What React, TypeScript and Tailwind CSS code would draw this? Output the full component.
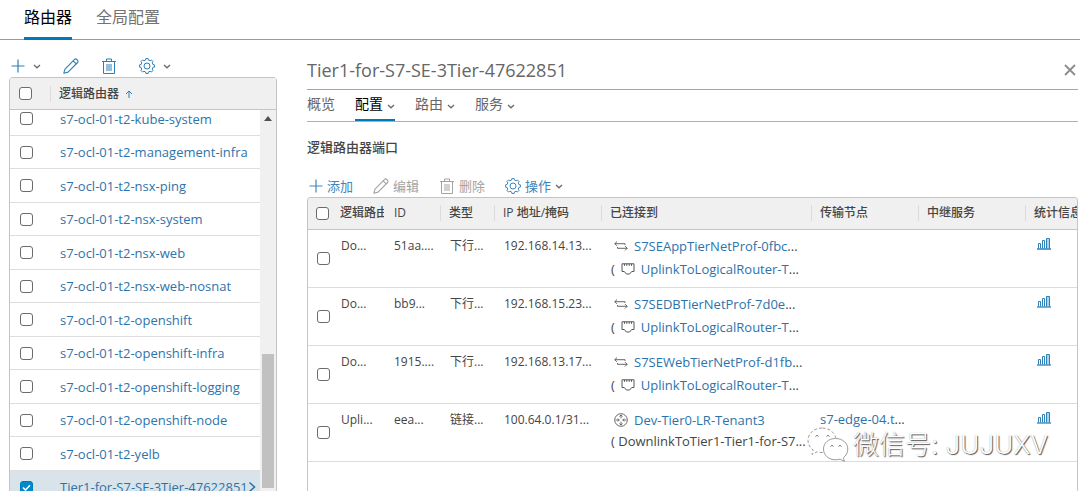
import { useState } from 'react'
import type { ReactNode } from 'react'

const routers = [
  's7-ocl-01-t2-kube-system',
  's7-ocl-01-t2-management-infra',
  's7-ocl-01-t2-nsx-ping',
  's7-ocl-01-t2-nsx-system',
  's7-ocl-01-t2-nsx-web',
  's7-ocl-01-t2-nsx-web-nosnat',
  's7-ocl-01-t2-openshift',
  's7-ocl-01-t2-openshift-infra',
  's7-ocl-01-t2-openshift-logging',
  's7-ocl-01-t2-openshift-node',
  's7-ocl-01-t2-yelb',
  'Tier1-for-S7-SE-3Tier-47622851',
]

const ports = [
  { name: 'Do...', id: '51aa....', type: '下行...', ip: '192.168.14.13...', target: 'S7SEAppTierNetProf-0fbc', peer: 'UplinkToLogicalRouter-T', node: '' },
  { name: 'Do...', id: 'bb9...', type: '下行...', ip: '192.168.15.23...', target: 'S7SEDBTierNetProf-7d0e', peer: 'UplinkToLogicalRouter-T', node: '' },
  { name: 'Do...', id: '1915....', type: '下行...', ip: '192.168.13.17...', target: 'S7SEWebTierNetProf-d1fb', peer: 'UplinkToLogicalRouter-T', node: '' },
  { name: 'Upli...', id: 'eea...', type: '链接...', ip: '100.64.0.1/31...', target: 'Dev-Tier0-LR-Tenant3', peer: '', node: 's7-edge-04.t' },
]

const columns = ['ID', '类型', 'IP 地址/掩码', '已连接到', '传输节点', '中继服务', '统计信息']

function PlusIcon() {
  return (
    <svg viewBox="0 0 14 14" className="size-[14px]" fill="none" stroke="currentColor" strokeWidth="1.2">
      <path d="M7 .5v13M.5 7h13" />
    </svg>
  )
}

function PencilIcon() {
  return (
    <svg viewBox="0 0 16 16" className="size-4" fill="none" stroke="currentColor" strokeWidth="1.1" strokeLinejoin="round">
      <path d="M.8 15.2 2 11.2 11.6 1.4Q12.6.4 13.8 1.5L14.6 2.3Q15.6 3.4 14.6 4.5L5 14.1ZM10.2 2.9l3 3" />
    </svg>
  )
}

function TrashIcon() {
  return (
    <svg viewBox="0 0 16 16" className="size-4" fill="none" stroke="currentColor">
      <path d="M1 3.5h14M2.5 3.5v12h11v-12M5.5 3.5V1h5v2.5M6 6v7M8 6v7M10 6v7" />
    </svg>
  )
}

// eight-tooth outline, centred on 8,8
const gear = Array.from({ length: 8 }, (_, i) => {
  const at = (deg: number, r: number) => {
    const a = ((i * 45 + deg) * Math.PI) / 180
    return `${(8 + r * Math.sin(a)).toFixed(2)} ${(8 - r * Math.cos(a)).toFixed(2)}`
  }
  return `${i ? 'L' : 'M'}${at(-14, 6.1)}L${at(-9, 7.5)}L${at(9, 7.5)}L${at(14, 6.1)}`
}).join('') + 'Z'

function GearIcon() {
  return (
    <svg viewBox="0 0 16 16" className="size-4" fill="none" stroke="currentColor" strokeLinejoin="round">
      <path d={gear} />
      <circle cx="8" cy="8" r="3" />
    </svg>
  )
}

function Chevron() {
  return (
    <svg viewBox="0 0 8 8" className="size-2 text-[#6a6a6a]" fill="none" stroke="currentColor" strokeWidth="1.3">
      <path d="M1 3 4 5.8 7 3" />
    </svg>
  )
}

function SwitchIcon() {
  return (
    <svg viewBox="0 0 14 10" className="h-[10px] w-[14px] shrink-0 text-[#565656]" fill="none" stroke="currentColor" strokeWidth=".9">
      <path d="M3 .5.8 2.7 3 4.9M.8 2.700h10.200v1.300M11 5.100l2.200 2.200L11 9.500M13.200 7.300H3.500V6" />
    </svg>
  )
}

function PortIcon() {
  return (
    <svg viewBox="0 0 14 12" className="h-3 w-[14px] shrink-0 text-[#565656]" fill="none" stroke="currentColor">
      <path d="M1 .8h12v7.7h-2.300L8.600 11H5.400L3.300 8.500H1ZM3.500.8v2M5.800.8v2M8.200.8v2M10.500.8v2" />
    </svg>
  )
}

function RouterIcon() {
  return (
    <svg viewBox="0 0 14 14" className="size-[14px] shrink-0 text-[#565656]" fill="none" stroke="currentColor" strokeWidth=".9">
      <circle cx="7" cy="7" r="6.3" />
      <path d="M7 2v3.400M5.500 3.500 7 2l1.500 1.500M7 12V8.600M5.500 10.500 7 12l1.500-1.500M1.800 7h3.400M3.800 5.500 5.300 7 3.800 8.500M12.200 7H8.800M10.200 5.500 8.700 7l1.500 1.500" />
    </svg>
  )
}

function StatsIcon() {
  return (
    <svg viewBox="0 0 14 13" className="h-[13px] w-[14px]" fill="none" stroke="#2d83b8">
      <path d="M1.500 11.500v-5h2v5M5.500 11.500v-8h2v8" />
      <path d="M9.500 11.500v-10h3v10" fill="#a9d3ea" />
      <path d="M0 12h14" strokeWidth="1.300" />
    </svg>
  )
}

function Checkbox({ label, checked, onChange }: { label: string; checked: boolean; onChange: () => void }) {
  return (
    <span className="relative block size-[13px] shrink-0">
      <input
        type="checkbox"
        aria-label={label}
        checked={checked}
        onChange={onChange}
        className="block size-[13px] appearance-none rounded-[3px] border border-[#6b6b6b] bg-white checked:border-[#0079b8] checked:bg-[#0089cc]"
      />
      {checked && (
        <svg viewBox="0 0 13 13" className="pointer-events-none absolute inset-0 size-[13px]" fill="none" stroke="#fff" strokeWidth="1.6">
          <path d="m3 6.5 2.500 2.500L10 4.300" />
        </svg>
      )}
    </span>
  )
}

function Tool({ children, disabled }: { children: ReactNode; disabled?: boolean }) {
  return (
    <button disabled={disabled} className="flex items-center gap-1 text-[#3c87bd] disabled:text-[#a3a3a3]">
      {children}
    </button>
  )
}

function Watermark() {
  return (
    <div className="pointer-events-none absolute right-8 bottom-7 flex items-center gap-1 font-['Inter','Noto_Sans_CJK_SC',sans-serif]">
      <svg viewBox="0 0 42 36" className="h-9 w-[42px]" fill="#fff" stroke="#9c9c9c">
        <path d="M15 1C7 1 1 6.500 1 13.500c0 4 2 7.200 5.200 9.500L5 27.500l5-2.700c1.600.5 3.300.7 5 .7C23 25.500 29 20 29 13.300 29 6.500 23 1 15 1Z" strokeDasharray="3 2" />
        <path d="M28.500 11.500C21.500 11.500 16.500 16 16.500 22s5 10.800 12 10.800c1.700 0 3.200-.2 4.600-.7l4.400 2.400-1.200-3.800c2.800-2 4.500-5 4.500-8.700 0-6-5.300-10.500-12.300-10.500Z" />
        <path d="M8.500 9.500q1.500-2.500 3 0M19.500 9.500q1.500-2.500 3 0M23.500 19.500q1.500-2.500 3 0M31.500 19.500q1.500-2.500 3 0" fill="none" stroke="#777" />
      </svg>
      <span className="text-[26px] leading-9 font-light text-white [text-shadow:1px_1px_1px_#555,0_0_1px_#999]">
        微信号: JUJUXV
      </span>
    </div>
  )
}

export default function App() {
  const [selected, setSelected] = useState<string[]>([routers[11]])
  const [picked, setPicked] = useState<number[]>([])

  function toggleRouter(name: string) {
    setSelected(selected.includes(name) ? selected.filter(s => s !== name) : [...selected, name])
  }

  function togglePort(i: number) {
    setPicked(picked.includes(i) ? picked.filter(p => p !== i) : [...picked, i])
  }

  return (
    <div className="relative flex h-screen flex-col overflow-hidden bg-white font-['Open_Sans','Noto_Sans_CJK_SC',sans-serif] text-[13px] leading-5 text-[#565656]">
      <nav className="flex h-10 shrink-0 gap-6 border-b border-[#9a9a9a] px-6 text-base">
        <a href="#routers" className="-mb-px border-b-3 border-[#0079b8] pt-[3px] leading-7 text-black">路由器</a>
        <a href="#global" className="pt-[3px] leading-7 text-[#737373]">全局配置</a>
      </nav>

      <div className="flex min-h-0 flex-1">
        <aside className="ml-[9px] flex w-[268px] shrink-0 flex-col pt-[15px]">
          <div className="flex h-[22px] shrink-0 items-center gap-[22px] pl-0.5">
            <button aria-label="添加" className="flex items-center gap-2 text-[#2d7fb8]"><PlusIcon /><Chevron /></button>
            <button aria-label="编辑" className="text-[#2d7fb8]"><PencilIcon /></button>
            <button aria-label="删除" className="text-[#2d7fb8]"><TrashIcon /></button>
            <button aria-label="操作" className="flex items-center gap-2 text-[#2d7fb8]"><GearIcon /><Chevron /></button>
          </div>

          <div className="flex min-h-0 flex-1 flex-col rounded-t border-x border-t border-[#c4c4c4]">
            <div className="flex h-8 shrink-0 items-center border-b border-[#c4c4c4] bg-[#f0f0f0] pl-[9px]">
              <Checkbox label="全选路由器" checked={false} onChange={() => setSelected(routers)} />
              <div className="ml-[18px] h-4 w-px bg-[#dcdcdc]" />
              <span className="ml-2 text-xs font-medium text-[#454545]">逻辑路由器</span>
              <svg viewBox="0 0 8 8" className="ml-1.5 size-2 text-[#2d7fb8]" fill="none" stroke="currentColor">
                <path d="M4 8V1M1 4l3-3 3 3" />
              </svg>
            </div>
            <div className="flex min-h-0 flex-1 overflow-hidden">
              <ul className="-mt-2 min-w-0 flex-1">
                {routers.map(name => (
                  <li
                    key={name}
                    className={`flex h-[33px] items-center gap-[27px] border-b pl-[10px] odd:h-[34px] ${
                      selected.includes(name) ? 'border-[#d9e4ea] bg-[#d9e4ea]' : 'border-[#dedede]'
                    }`}
                  >
                    <Checkbox label={name} checked={selected.includes(name)} onChange={() => toggleRouter(name)} />
                    <a href={'#' + name} className="flex items-center whitespace-nowrap text-[#2d73ab]">
                      {name}
                      {selected.includes(name) && (
                        <svg viewBox="0 0 8 12" className="h-3 w-2" fill="none" stroke="currentColor" strokeWidth="1.6">
                          <path d="m1.500 1.500 5 4.500-5 4.500" />
                        </svg>
                      )}
                    </a>
                  </li>
                ))}
              </ul>
              <div className="flex w-4 shrink-0 flex-col items-center justify-between bg-[#f0f0f0] pt-1.5 pb-[3px]">
                <svg viewBox="0 0 8 5" className="h-[5px] w-2" fill="#505050"><path d="M4 0l4 5H0Z" /></svg>
                <div className="h-[134px] w-3 bg-[#c1c1c1]" />
              </div>
            </div>
          </div>
        </aside>

        <main className="ml-[30px] flex min-w-0 flex-1 flex-col pr-0.5">
          <div className="flex h-[50px] shrink-0 items-center justify-between border-b border-[#a5a5a5] pt-2.5 pr-0.5">
            <h1 className="text-lg leading-6 text-[#666]">Tier1-for-S7-SE-3Tier-47622851</h1>
            <button aria-label="关闭">
              <svg viewBox="0 0 12 12" className="size-3" fill="none" stroke="#8c8c8c" strokeWidth="1.8">
                <path d="m1 1 10 10M11 1 1 11" />
              </svg>
            </button>
          </div>

          <nav className="flex h-8 shrink-0 items-stretch gap-5 border-b border-[#b0b0b0] text-sm leading-7 text-[#666]">
            <a href="#overview">概览</a>
            <a href="#config" className="flex items-start gap-1 border-b-2 border-[#0079b8] text-black">配置<span className="flex h-8 items-center"><Chevron /></span></a>
            <a href="#routing" className="flex items-start gap-1">路由<span className="flex h-8 items-center"><Chevron /></span></a>
            <a href="#services" className="flex items-start gap-1">服务<span className="flex h-8 items-center"><Chevron /></span></a>
          </nav>

          <h2 className="mt-[15px] shrink-0 font-medium text-[#454545]">逻辑路由器端口</h2>

          <div className="mt-[18px] flex h-[22px] shrink-0 items-center gap-5 pl-0.5">
            <Tool><PlusIcon /><span>添加</span></Tool>
            <Tool disabled><PencilIcon /><span>编辑</span></Tool>
            <Tool disabled><TrashIcon /><span>删除</span></Tool>
            <Tool><GearIcon /><span>操作</span><Chevron /></Tool>
          </div>

          <div className="min-h-0 flex-1 overflow-hidden rounded-t border-x border-t border-[#c4c4c4]">
            <table className="w-full table-fixed border-collapse text-xs leading-5 text-[#454545]">
              <colgroup>
                <col className="w-[24px]" />
                <col className="w-[54px]" />
                <col className="w-[54px]" />
                <col className="w-[54px]" />
                <col className="w-[107px]" />
                <col />
                <col className="w-[107px]" />
                <col className="w-[107px]" />
                <col className="w-[52px]" />
              </colgroup>
              <thead>
                <tr className="h-[31px] border-b border-[#c4c4c4] bg-[#f0f0f0]">
                  <th className="pl-2"><Checkbox label="全选端口" checked={false} onChange={() => setPicked([0, 1, 2, 3])} /></th>
                  <th className="pr-0.5 pl-2 text-left font-medium whitespace-nowrap">
                    <div className="overflow-hidden">逻辑路由器</div>
                  </th>
                  {columns.map((c, i) => (
                    <th key={c} className="overflow-hidden text-left font-medium whitespace-nowrap">
                      <div className={`pl-2 leading-4 ${i ? 'border-l border-[#dcdcdc]' : ''}`}>{c}</div>
                    </th>
                  ))}
                </tr>
              </thead>
              <tbody>
                {ports.map((p, i) => (
                  <tr key={i} className="h-[58px] border-b border-[#dcdcdc] align-top whitespace-nowrap">
                    <td className="pl-[9px] align-middle">
                      <Checkbox label={'端口 ' + p.id} checked={picked.includes(i)} onChange={() => togglePort(i)} />
                    </td>
                    <td className="pt-1.5 pl-[9px]">{p.name}</td>
                    <td className="pt-1.5 pl-2">{p.id}</td>
                    <td className="pt-1.5 pl-[10px]">{p.type}</td>
                    <td className="pt-1.5 pl-[10px]">{p.ip}</td>
                    <td className="pt-1.5 pl-[10px] text-[13px] leading-5">
                      <div className="flex items-center gap-1.5 pl-[3px]">
                        {p.peer ? <SwitchIcon /> : <RouterIcon />}
                        <span>
                          <a href="#target" className="text-[#2d73ab]">{p.target}</a>{p.peer && '...'}
                        </span>
                      </div>
                      {p.peer ? (
                        <div className="mt-[3px] flex items-center gap-1.5">
                          <span>(</span>
                          <PortIcon />
                          <span><a href="#peer" className="text-[#2d73ab]">{p.peer}</a>...</span>
                        </div>
                      ) : (
                        <div className="mt-px">( DownlinkToTier1-Tier1-for-S7...</div>
                      )}
                    </td>
                    <td className="pt-[5px] pl-[9px] text-[13px] leading-5">
                      {p.node && <span><a href="#node" className="text-[#2d73ab]">{p.node}</a>...</span>}
                    </td>
                    <td />
                    <td className="pt-1.5 pl-3"><button aria-label="统计信息"><StatsIcon /></button></td>
                  </tr>
                ))}
              </tbody>
            </table>
          </div>
        </main>
      </div>

      <Watermark />
    </div>
  )
}
